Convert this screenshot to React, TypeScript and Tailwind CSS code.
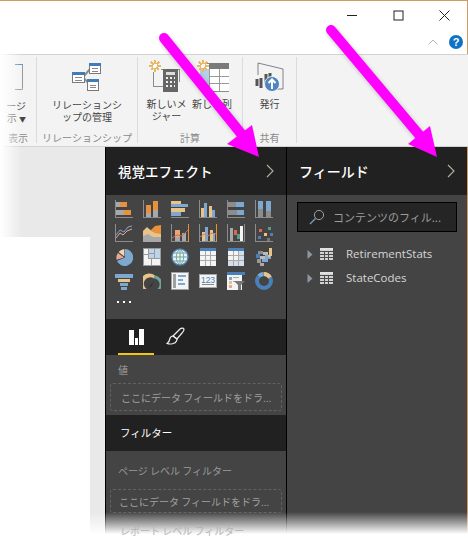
import React from "react";

const O = "#e8913c", G = "#a8a8a8", B = "#7fa8d1", T = "#e8c48a", A = "#8c8c8c", W = "#f4f4f4", D = "#4a80b8";
const FONT = { fontFamily: "'Noto Sans CJK JP','Noto Sans',sans-serif" };

type RP = [number, number, number, number, string];
const Rs = ({ r }: { r: RP[] }) => (
  <>
    {r.map(([x, y, w, h, f], i) => (
      <rect key={i} x={x} y={y} width={w} height={h} fill={f} />
    ))}
  </>
);
const Ic = ({ children }: { children?: React.ReactNode }) => (
  <svg width="18" height="18" viewBox="0 0 18 18" shapeRendering="crispEdges">{children}</svg>
);
const L: RP[] = [[0, 0, 1, 18, A], [0, 17, 18, 1, A]];

const icons: React.ReactNode[] = [
  <Ic><Rs r={[...L, [1, 2, 4, 5, G], [5, 2, 7, 5, O], [1, 10, 8, 5, G], [9, 10, 7, 5, O]]} /></Ic>,
  <Ic><Rs r={[...L, [3, 5, 5, 8, O], [3, 13, 5, 4, G], [10, 1, 5, 9, O], [10, 10, 5, 7, G]]} /></Ic>,
  <Ic><Rs r={[[0, 1, 10, 3, T], [0, 4, 17, 3, B], [0, 8, 14, 4, T], [0, 12, 10, 4, B], ...L.slice(1)]} /></Ic>,
  <Ic><Rs r={[...L, [2, 8, 3, 9, T], [5, 3, 3, 14, B], [10, 6, 3, 11, T], [13, 10, 3, 7, B]]} /></Ic>,
  <Ic><Rs r={[...L, [1, 2, 8, 5, A], [9, 2, 8, 5, B], [1, 10, 9, 5, A], [10, 10, 7, 5, B]]} /></Ic>,
  <Ic><Rs r={[...L, [3, 1, 5, 8, B], [3, 9, 5, 8, A], [11, 1, 5, 10, B], [11, 11, 5, 6, A]]} /></Ic>,
  <Ic>
    <Rs r={L} />
    <polyline points="1,14 5,9 8,11 12,7 17,5" fill="none" stroke="#e8a898" strokeWidth="1" shapeRendering="auto" />
    <polyline points="1,11 5,6 9,8 13,3 17,2" fill="none" stroke={B} strokeWidth="1" shapeRendering="auto" />
  </Ic>,
  <Ic>
    <path d="M0 9 L4 4 L8 6 L12 2 L18 1 V18 H0Z" fill={O} shapeRendering="auto" />
    <path d="M0 7 L4 3 L8 7 L12 9 L18 10 V18 H0Z" fill={T} shapeRendering="auto" />
    <path d="M0 12 L5 10 L10 13 L18 13 V18 H0Z" fill={G} shapeRendering="auto" />
  </Ic>,
  <Ic>
    <Rs r={[...L, [17, 0, 1, 18, O], [4, 6, 5, 11, "#e8a878"], [11, 9, 4, 8, G], [4, 13, 5, 4, G]]} />
    <polyline points="1,14 6,11 11,12 17,6" fill="none" stroke="#d9684f" strokeWidth="1" shapeRendering="auto" />
  </Ic>,
  <Ic>
    <Rs r={[...L, [17, 0, 1, 18, O], [3, 8, 3, 9, T], [6, 3, 3, 14, B], [11, 6, 3, 11, T], [14, 9, 2, 8, B]]} />
    <polyline points="1,13 5,10 9,12 13,9 17,10" fill="none" stroke="#e07a55" strokeWidth="1" shapeRendering="auto" />
  </Ic>,
  <Ic><Rs r={[...L, [17, 0, 1, 18, A], [3, 4, 3, 13, G], [7, 6, 3, 5, "#d9684f"], [10, 10, 3, 5, "#5a9a88"], [13, 2, 3, 15, W]]} /></Ic>,
  <Ic><Rs r={[...L, [4, 5, 3, 3, "#d9684f"], [13, 3, 3, 3, "#5a9a88"], [3, 12, 3, 3, D], [9, 9, 3, 3, T], [15, 9, 3, 3, D], [12, 14, 3, 3, "#777"]]} /></Ic>,
  <Ic>
    <path d="M10 1 A8.5 8.5 0 1 1 2 13 L10 9.5Z" fill={B} shapeRendering="auto" />
    <path d="M1.6 11.8 A8.5 8.5 0 0 1 3 5 L9 9.5Z" fill="#e8a898" shapeRendering="auto" />
    <path d="M3.6 4 A8.5 8.5 0 0 1 9.4 1 L9.4 8.5Z" fill="#f0d8b0" shapeRendering="auto" />
  </Ic>,
  <Ic><Rs r={[[0, 0, 18, 18, "#9a9a9a"], [1, 1, 4, 16, W], [5, 1, 6, 9, "#bdd3e8"], [12, 1, 5, 9, "#bdd3e8"], [1, 6, 4, 1, "#999"], [1, 11, 7, 6, W], [9, 11, 8, 6, W], [5, 1, 1, 9, "#999"], [6, 5, 5, 1, "#999"]]} /></Ic>,
  <Ic>
    <circle cx="9" cy="9" r="8" fill="#f0f4f8" stroke={D} strokeWidth="1.4" shapeRendering="auto" />
    <path d="M1 9 H17 M2 5 H16 M2 13 H16 M9 1 V17 M9 1 C4 5 4 13 9 17 M9 1 C14 5 14 13 9 17" fill="none" stroke="#6fa598" strokeWidth="1" shapeRendering="auto" />
  </Ic>,
  <Ic>
    <Rs r={[[1, 0, 16, 18, W], [1, 0, 16, 3, D], [6, 3, 1, 15, "#aaa"], [11, 3, 1, 15, "#aaa"], [1, 7, 16, 1, "#aaa"], [1, 12, 16, 1, "#aaa"]]} />
  </Ic>,
  <Ic>
    <Rs r={[[1, 0, 16, 18, "#d3dfea"], [1, 0, 16, 3, D], [1, 3, 10, 9, W], [6, 3, 1, 15, "#aaa"], [11, 3, 1, 15, "#aaa"], [1, 7, 16, 1, "#aaa"], [1, 12, 16, 1, "#aaa"]]} />
  </Ic>,
  <Ic>
    <Rs r={[[3, 3, 5, 3, A], [8, 4, 5, 3, "#bbb"], [1, 6, 4, 4, D], [5, 8, 5, 3, "#bbb"], [10, 7, 6, 4, B], [14, 0, 3, 8, T], [13, 7, 2, 2, T], [2, 11, 4, 4, "#999"], [7, 11, 6, 3, B], [5, 15, 4, 3, "#aaa"]]} />
  </Ic>,
  <Ic><Rs r={[[0, 2, 18, 4, B], [3, 7, 12, 3, T], [5, 11, 8, 3, B], [6, 15, 6, 3, B]]} /></Ic>,
  <Ic>
    <path d="M3.5 17 H0.5 A8.5 8.5 0 0 1 12 3.5 L11 6.5 A6 6 0 0 0 3.5 17Z" fill={T} shapeRendering="auto" />
    <path d="M12 3.5 A8.5 8.5 0 0 1 17.5 17 H14.5 A6 6 0 0 0 11 6.5Z" fill="#6fa598" shapeRendering="auto" />
    <path d="M5 16 L10 10 L9 14Z" fill="#333" shapeRendering="auto" />
  </Ic>,
  <Ic><Rs r={[[0, 0, 18, 18, "#a0a0a0"], [1, 1, 16, 16, W], [2, 2, 3, 14, "#a0a0a0"], [7, 3, 8, 2, B], [7, 7, 5, 2, B], [7, 11, 7, 2, B]]} /></Ic>,
  <Ic>
    <Rs r={[[0, 2, 18, 14, "#a6a6a6"], [1, 3, 16, 12, W], [3, 12, 12, 1, "#888"]]} />
    <text x="9" y="11" textAnchor="middle" fontSize="8.5" fontFamily="'Liberation Sans',sans-serif" fill={D}>123</text>
  </Ic>,
  <Ic>
    <Rs r={[[0, 0, 15, 18, W], [0, 0, 18, 3, D], [2, 5, 3, 3, B], [2, 9, 3, 3, T], [2, 13, 3, 3, "#e8a898"], [6, 5, 6, 1, "#aaa"], [6, 9, 4, 1, "#aaa"]]} />
    <path d="M7 9 H18 L14 13 V18 H11 V13Z" fill="#777" shapeRendering="auto" />
  </Ic>,
  <Ic>
    <circle cx="9" cy="9" r="7" fill="none" stroke={D} strokeWidth="4" shapeRendering="auto" />
    <path d="M9 2 A7 7 0 0 1 15 5.5" fill="none" stroke={T} strokeWidth="4" shapeRendering="auto" />
    <path d="M4 4 A7 7 0 0 1 8.5 2" fill="none" stroke={B} strokeWidth="4" shapeRendering="auto" />
  </Ic>,
];

const Sep = () => <div className="w-px h-[86px] mt-[2px] bg-[#dcdcdc] shrink-0" />;

const Group = ({ w, label, children }: { w: number; label: string; children?: React.ReactNode }) => (
  <div className="flex flex-col items-center shrink-0 h-full" style={{ width: w }}>
    <div className="h-[76px] w-full flex flex-col items-center">{children}</div>
    <div className="text-[10px] leading-[14px] text-[#8a8a8a] whitespace-nowrap">{label}</div>
  </div>
);

const DropBox = ({ h, text, pl }: { h: string; text: string; pl: string }) => (
  <div className={`mx-[4px] ${h} ${pl} border border-dashed border-[#626262] rounded-[3px] flex items-center text-[10px] text-[#a0a0a0] whitespace-nowrap overflow-hidden`}>
    {text}
  </div>
);

const Chev = () => (
  <svg width="8" height="14" viewBox="0 0 8 14" fill="none">
    <path d="M1 1 L7 7 L1 13" stroke="#b9b0a4" strokeWidth="1.1" />
  </svg>
);

const TableIcon = () => (
  <svg width="13" height="12" viewBox="0 0 13 12" shapeRendering="crispEdges">
    <rect width="13" height="12" fill="#d0d0d0" />
    <path d="M4.5 3V12M8.5 3V12M0 3.5H13M0 6.5H13M0 9.5H13" stroke="#4a4a4a" strokeWidth="1" />
    <rect width="13" height="2" fill="#e0e0e0" />
  </svg>
);

const FieldRow = ({ name }: { name: string }) => (
  <div className="flex items-center h-[24px] pl-[20px]">
    <svg width="6" height="9" viewBox="0 0 6 9" className="mr-[7px]"><path d="M0.5 0 L5.5 4.5 L0.5 9Z" fill="#8d97a3" /></svg>
    <TableIcon />
    <span className="ml-[13px] text-[11.5px] text-[#d6d6d6]" style={{ fontFamily: "'Open Sans',sans-serif" }}>{name}</span>
  </div>
);

export default function App() {
  return (
    <div className="relative w-[468px] h-[538px] overflow-hidden bg-white flex flex-col" style={FONT}>
      {/* top window bar */}
      <div className="h-[54px] shrink-0 border-t border-r border-[#d49c5c] flex flex-col">
        <div className="h-[29px] flex justify-end items-center pr-[17px] gap-[35px]">
          <svg width="11" height="11" viewBox="0 0 11 11"><path d="M0 5.5H10" stroke="#222" strokeWidth="1" /></svg>
          <svg width="11" height="11" viewBox="0 0 11 11"><rect x="1" y="1" width="9" height="9" fill="none" stroke="#222" strokeWidth="1" /></svg>
          <svg width="11" height="11" viewBox="0 0 11 11"><path d="M0.5 0.5L10.5 10.5M10.5 0.5L0.5 10.5" stroke="#222" strokeWidth="1" /></svg>
        </div>
        <div className="flex justify-end items-center pr-[4px] gap-[11px] mt-[5px]">
          <svg width="10" height="6" viewBox="0 0 10 6" fill="none"><path d="M0.5 5.5L5 1L9.5 5.5" stroke="#b5b5b5" strokeWidth="1" /></svg>
          <div className="w-[14px] h-[14px] rounded-full bg-[#0f72c6] text-white text-[11px] font-bold leading-[14px] text-center" style={{ fontFamily: "'Liberation Sans',sans-serif" }}>?</div>
        </div>
      </div>
      {/* ribbon */}
      <div className="h-[93px] shrink-0 bg-[#f3f3f3] border-y border-[#d2d2d2] flex text-[#444]">
        <Group w={36} label="表示">
          <div className="w-full h-[32px] flex justify-end mt-[6px]">
            <div className="w-[8px] h-[26px] mt-[3px] mr-[13px] border border-l-0 border-[#999] border-t-[#5a8fc4] rounded-br-[2px]" />
          </div>
          <div className="text-[10px] leading-[12px] mt-[7px] w-full text-right pr-[10px] whitespace-nowrap">ージ<br />示 <span className="text-[7px]">▼</span></div>
        </Group>
        <Sep />
        <Group w={100} label="リレーションシップ">
          <svg width="30" height="30" viewBox="0 0 30 30" className="mt-[7px]" shapeRendering="crispEdges">
            <path d="M12 14 L18 7 M12 16 L16 21" stroke="#8c8c8c" strokeWidth="2" fill="none" shapeRendering="auto" />
            <rect x="0.5" y="10.5" width="12" height="10" fill="#fff" stroke="#7a7a7a" />
            <rect x="0" y="10" width="13" height="3" fill="#3f7cb8" />
            <path d="M3 15.5H10M3 18H10" stroke="#888" />
            <rect x="17.5" y="1.5" width="11" height="10" fill="#fff" stroke="#7a7a7a" />
            <rect x="17" y="1" width="12" height="3" fill="#3f7cb8" />
            <path d="M20 6.5H26M20 9H26" stroke="#888" />
            <rect x="15.5" y="17.5" width="11" height="11" fill="#fff" stroke="#7a7a7a" />
            <rect x="15" y="17" width="12" height="3" fill="#3f7cb8" />
            <path d="M18 23H24M18 25.5H24" stroke="#888" />
          </svg>
          <div className="text-[10px] leading-[12px] text-center mt-[7px] whitespace-nowrap">リレーションシ<br />ップの管理</div>
        </Group>
        <Sep />
        <Group w={104} label="計算">
          <div className="w-full flex pl-[11px] mt-[5px] gap-[16px]">
            <svg width="32" height="32" viewBox="0 0 32 32" shapeRendering="crispEdges">
              <path d="M6 0V12M0 6H12M2 2L10 10M10 2L2 10" stroke="#e9b765" strokeWidth="1.5" />
              <circle cx="6" cy="6" r="2" fill="#fff" />
              <path d="M4 12V26H14M12 9H30V22" stroke="#8c8c8c" fill="none" />
              <rect x="14" y="9" width="15" height="23" rx="1" fill="#666" />
              <rect x="17" y="12" width="9" height="3" fill="#ddd" />
              <path d="M17 18h2M21 18h2M25 18h1M17 22h2M21 22h2M25 22h1M17 26h2M21 26h2M25 26h1" stroke="#eee" strokeWidth="2" />
            </svg>
            <svg width="32" height="32" viewBox="0 0 32 32" shapeRendering="crispEdges">
              <rect x="4" y="3" width="28" height="28" fill="#fff" stroke="#8c8c8c" />
              <rect x="3" y="9" width="9" height="22" fill="#b5cfe6" />
              <rect x="12" y="3" width="20" height="6" fill="#7a7a7a" />
              <path d="M12 9V31M22 9V31M12 16H32M12 23H32" stroke="#9a9a9a" />
              <path d="M6 0V12M0 6H12M2 2L10 10M10 2L2 10" stroke="#e9b765" strokeWidth="1.5" />
              <circle cx="6" cy="6" r="2" fill="#fff" />
            </svg>
          </div>
          <div className="w-full flex pl-[8px] mt-[6px] gap-[5px] text-[10px] leading-[12px] whitespace-nowrap">
            <div className="w-[41px] text-center">新しいメ<br />ジャー</div>
            <div>新しい列</div>
          </div>
        </Group>
        <Sep />
        <Group w={53} label="共有">
          <svg width="30" height="30" viewBox="0 0 30 30" className="mt-[7px]">
            <path d="M3 13V1L28 7V27H20" fill="none" stroke="#666" strokeWidth="0.8" />
            <path d="M2 17V24M6 16V26M11 12V22M15 11V20" stroke="#555" strokeWidth="3" />
            <circle cx="17" cy="22" r="7.5" fill="#4f86bf" stroke="#fff" strokeWidth="0.8" />
            <path d="M17 27V18M13.5 21L17 17.5L20.5 21" stroke="#fff" strokeWidth="2" fill="none" />
          </svg>
          <div className="text-[10px] mt-[6px] leading-[12px]">発行</div>
        </Group>
        <Sep />
      </div>
      {/* main */}
      <div className="flex-1 flex min-h-0">
        <div className="w-[105px] shrink-0 bg-[#e9e9e9] pt-[90px]">
          <div className="w-[90px] h-full bg-white" />
        </div>
        {/* visualizations */}
        <div className="w-[182px] shrink-0 bg-[#444444] border-x border-black flex flex-col">
          <div className="h-[48px] shrink-0 bg-[#212121] flex items-center justify-between pl-[12px] pr-[12px] text-white text-[13.5px] font-medium">
            <span>視覚エフェクト</span>
            <Chev />
          </div>
          <div className="h-[124px] shrink-0 pl-[9px] pt-[5px]">
            <div className="grid grid-cols-[repeat(6,18px)] auto-rows-[18px] gap-x-[10px] gap-y-[6px]">
              {icons.map((ic, i) => <div key={i}>{ic}</div>)}
            </div>
            <div className="flex gap-[4px] pl-[2px] mt-[11px]">
              <div className="w-[2px] h-[2px] bg-white" />
              <div className="w-[2px] h-[2px] bg-white" />
              <div className="w-[2px] h-[2px] bg-white" />
            </div>
          </div>
          <div className="h-[36px] shrink-0 bg-[#212121] flex pl-[12px]">
            <div className="w-[36px] h-full border-b-2 border-[#f2c811] flex justify-center pt-[10px]">
              <svg width="15" height="16" viewBox="0 0 15 16" shapeRendering="crispEdges">
                <path d="M0 1H5V16H0ZM6 9H9V16H6ZM10 0H15V16H10Z" fill="#fff" />
              </svg>
            </div>
            <svg width="19" height="18" viewBox="0 0 19 18" fill="none" className="ml-[12px] mt-[8px]" stroke="#eee" strokeWidth="1.2">
              <path d="M7 9L14 2C15.5 0.7 18 0.8 18 2.5C18 4 17 5 16 6L11 12Z" />
              <path d="M7 9C4 9 4 11 3.5 13C3 15 2 15.5 1 16.5C4 17.5 9.5 17 10.5 14C11 13 11 12.5 11 12Z" />
            </svg>
          </div>
          <div className="h-[60px] shrink-0 flex flex-col">
            <div className="h-[28px] flex items-center pl-[12px] text-[10px] text-[#8f8f8f] font-medium">値</div>
            <DropBox h="h-[28px]" pl="pl-[10px]" text="ここにデータ フィールドをドラ..." />
          </div>
          <div className="h-[36px] shrink-0 bg-[#212121] flex items-center pl-[14px] text-[10.5px] text-white">フィルター</div>
          <div className="flex-1 min-h-0 overflow-hidden">
            <div className="h-[38px] flex items-center pl-[12px] text-[10px] text-[#9a9a9a] whitespace-nowrap">ページ レベル フィルター</div>
            <DropBox h="h-[24px]" pl="pl-[8px]" text="ここにデータ フィールドをドラ..." />
            <div className="relative z-10 pl-[14px] mt-[10px] text-[10px] text-[#b4b4b4] whitespace-nowrap">レポート レベル フィルター</div>
          </div>
        </div>
        {/* fields */}
        <div className="flex-1 bg-[#444444] border-r border-[#d49c5c] flex flex-col">
          <div className="h-[48px] shrink-0 bg-[#212121] flex items-center justify-between pl-[12px] pr-[12px] text-white text-[14px] font-medium">
            <span>フィールド</span>
            <Chev />
          </div>
          <div className="mx-[10px] mt-[7px] h-[30px] bg-[#252525] border border-black flex items-center pl-[11px]">
            <svg width="16" height="16" viewBox="0 0 16 16" fill="none" className="mr-[8px]">
              <circle cx="10" cy="6" r="4.6" stroke="#a0a0a0" strokeWidth="1" />
              <path d="M6.5 9.5L1 15" stroke="#7f97ad" strokeWidth="1.4" />
            </svg>
            <span className="text-[11px] text-[#9c9c9c] whitespace-nowrap">コンテンツのフィル...</span>
          </div>
          <div className="mt-[10px]">
            <FieldRow name="RetirementStats" />
            <FieldRow name="StateCodes" />
          </div>
        </div>
      </div>
      {/* fades */}
      <div className="absolute left-0 top-[54px] bottom-0 w-[22px] bg-gradient-to-r from-white to-transparent" />
      <div className="absolute left-0 right-0 bottom-0 h-[26px] bg-gradient-to-b from-[rgba(255,255,255,0)] to-white to-[85%]" />
      {/* arrows */}
      <svg className="absolute inset-0 z-20" width="468" height="538" viewBox="0 0 468 538" fill="none">
        <g transform="translate(2,3)" opacity="0.3" style={{ filter: "blur(2px)" }}>
          <path d="M164 38L243 136M331 30L421 137" stroke="#333" strokeWidth="10" strokeLinecap="round" />
        </g>
        <g stroke="#ff00ff" strokeWidth="10" strokeLinecap="round">
          <path d="M164 38L243 136" />
          <path d="M331 30L421 137" />
        </g>
        <g fill="#ff00ff">
          <path d="M259 157L252 125L227 144Z" />
          <path d="M437 157L430 126L408 144Z" />
        </g>
      </svg>
    </div>
  );
}
